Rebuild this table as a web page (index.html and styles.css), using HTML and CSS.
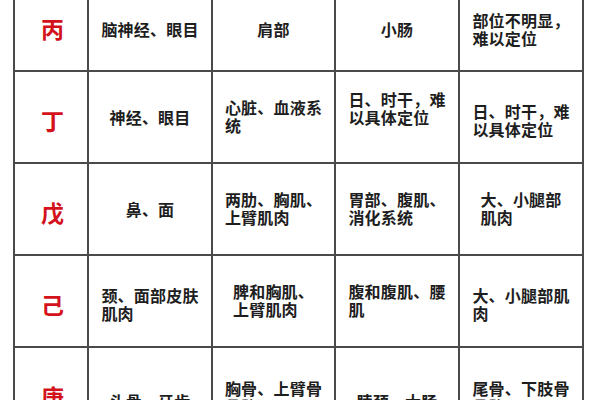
FILE: index.html
```html
<!DOCTYPE html>
<html lang="zh-CN">
<head>
<meta charset="utf-8">
<link rel="stylesheet" href="styles.css">
</head>
<body>
<table class="grid">
  <colgroup>
    <col class="c1"><col class="c2"><col class="c3"><col class="c4"><col class="c5">
  </colgroup>
  <tr class="first">
    <td class="stem"><span class="s">丙</span></td>
    <td><span class="t">脑神经、眼目</span></td>
    <td><span class="t">肩部</span></td>
    <td><span class="t">小肠</span></td>
    <td><span class="t">部位不明显，<br>难以定位</span></td>
  </tr>
  <tr>
    <td class="stem"><span class="s">丁</span></td>
    <td><span class="t">神经、眼目</span></td>
    <td><span class="t">心脏、血液系<br>统</span></td>
    <td><span class="t up">日、时干，难<br>以具体定位</span></td>
    <td><span class="t down">日、时干，难<br>以具体定位</span></td>
  </tr>
  <tr>
    <td class="stem"><span class="s">戊</span></td>
    <td><span class="t">鼻、面</span></td>
    <td><span class="t">两肋、胸肌、<br>上臂肌肉</span></td>
    <td><span class="t">胃部、腹肌、<br>消化系统</span></td>
    <td><span class="t">大、小腿部<br>肌肉</span></td>
  </tr>
  <tr>
    <td class="stem"><span class="s">己</span></td>
    <td><span class="t down">颈、面部皮肤<br>肌肉</span></td>
    <td><span class="t">脾和胸肌、<br>上臂肌肉</span></td>
    <td><span class="t">腹和腹肌、腰<br>肌</span></td>
    <td><span class="t down">大、小腿部肌<br>肉</span></td>
  </tr>
  <tr class="last">
    <td class="stem"><span class="s">庚</span></td>
    <td><span class="t one">头骨、牙齿</span></td>
    <td><span class="t">胸骨、上臂骨<br>骨骼</span></td>
    <td><span class="t one">脖颈、大肠</span></td>
    <td><span class="t">尾骨、下肢骨<br>骨骼</span></td>
  </tr>
</table>
</body>
</html>
```

FILE: styles.css
```css
html, body {
  margin: 0;
  padding: 0;
  background: #ffffff;
  overflow: hidden;
}

.grid {
  border-collapse: collapse;
  margin-top: -22px;
  margin-left: 13px;
  table-layout: fixed;
  width: 569px;
  font-family: "Noto Sans CJK SC", "Noto Sans", sans-serif;
  color: #1e1e1e;
}

.c1 { width: 74px; }
.c2 { width: 124px; }
.c3 { width: 123px; }
.c4 { width: 124px; }
.c5 { width: 124px; }

.grid td {
  border: 2px solid #4a4a4a;
  height: 92px;
  padding: 0 8px;
  text-align: center;
  vertical-align: middle;
  box-sizing: border-box;
}

.grid .stem {
  padding: 0 0 0 3px;
}

.s {
  display: inline-block;
  margin-top: 9px;
  color: #d3121c;
  font-size: 23px;
  line-height: 24px;
  font-weight: 700;
}

.t {
  display: inline-block;
  text-align: left;
  font-size: 16px;
  line-height: 18px;
  font-weight: 700;
  letter-spacing: 0.2px;
}

.first .t {
  margin-top: 10px;
}

.last .t {
  margin-top: 10px;
}

.last .t.one {
  margin-top: 18px;
}

.up {
  margin-bottom: 18px;
}

.down {
  margin-top: 8px;
}
```
